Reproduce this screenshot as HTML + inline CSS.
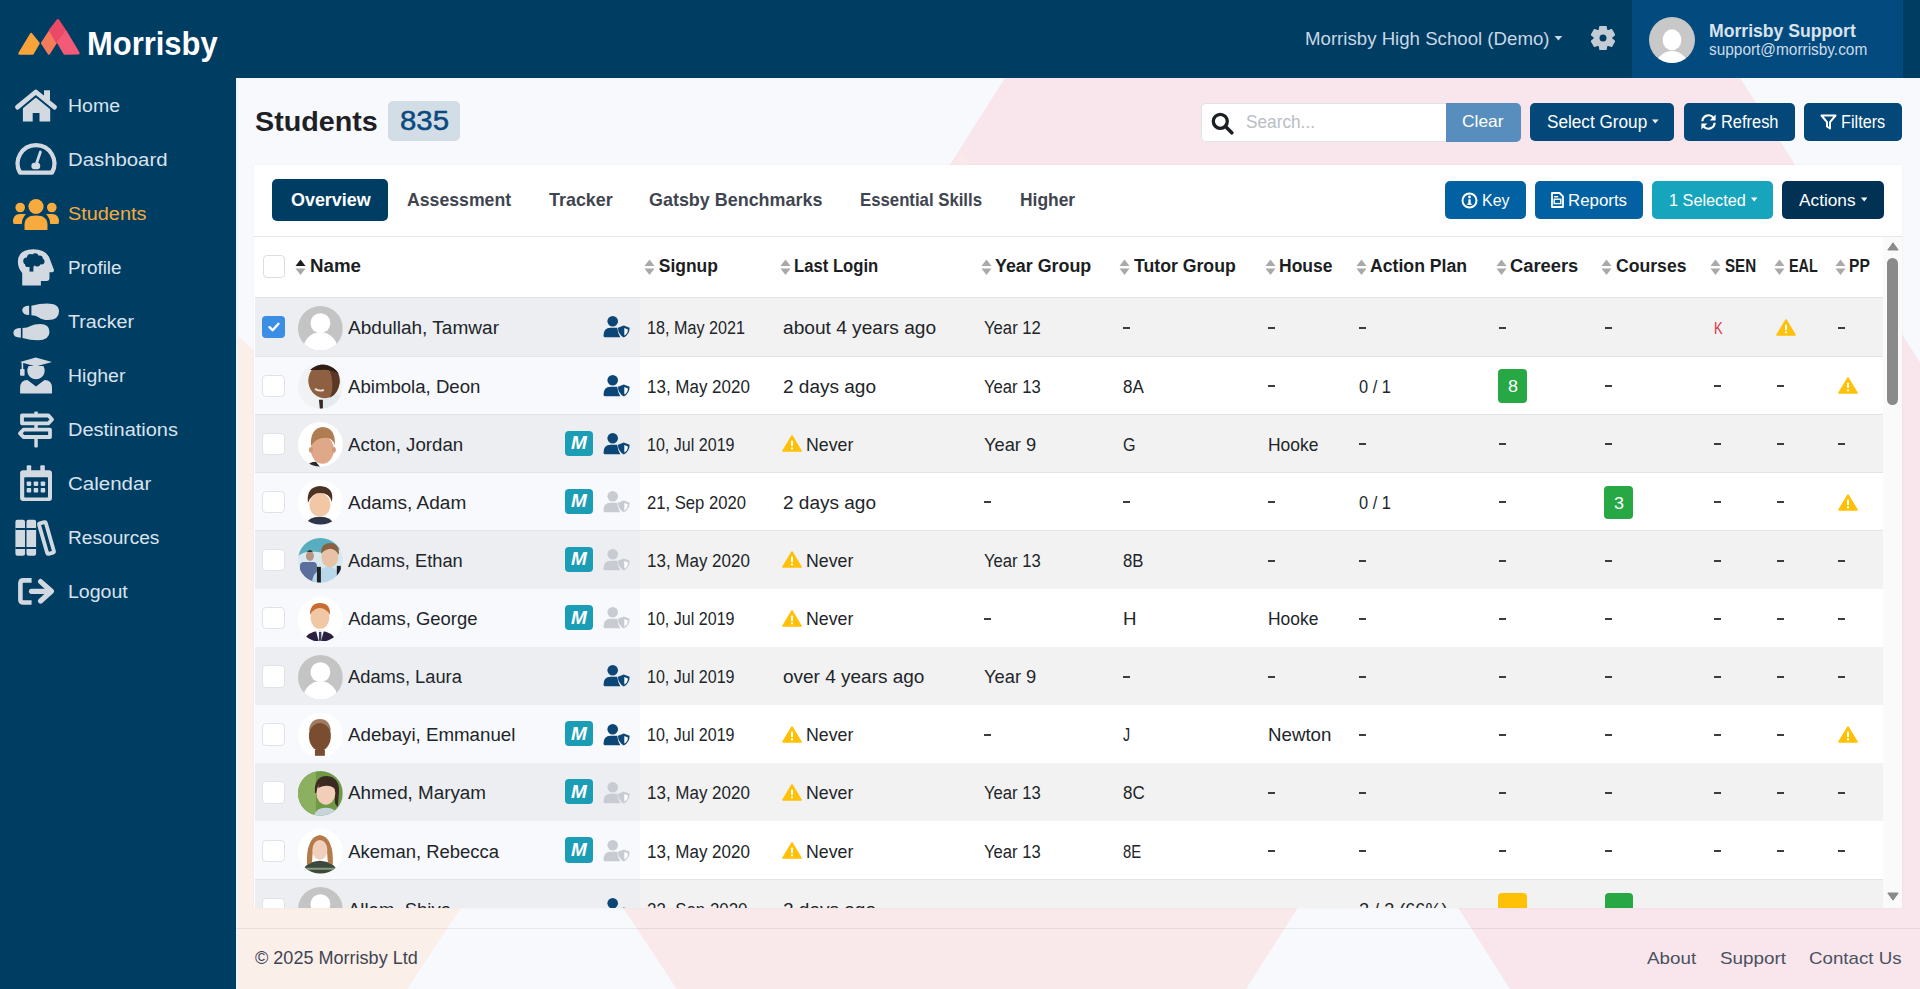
<!DOCTYPE html>
<html><head><meta charset="utf-8"><title>Students</title>
<style>
html,body{margin:0;padding:0;width:1920px;height:989px;overflow:hidden;background:#f8f9fc;font-family:"Liberation Sans",sans-serif}
.t{position:absolute;white-space:nowrap;line-height:1;transform-origin:0 0}
svg{display:block}
</style></head><body>
<svg style="position:absolute;left:0;top:0" width="1920" height="989" viewBox="0 0 1920 989">
<rect x="236" y="78" width="1684" height="911" fill="#f8f9fc"/>
<polygon points="238,336.4 254,350.2 1100,1081 -200,1100 -200,200" fill="#fbefea"/>
<polygon points="1372.5,-503.5 2418,1150 327,1150" fill="#f8e6ec"/>
<polygon points="962,152 1400,832 960,1500 500,830" fill="#f9e9eb"/>
<polygon points="542,785 684,1000 400,1000" fill="#f8f9fc"/>
<polygon points="1378,782 1515,997 1241,997" fill="#f8f9fc"/>
</svg>
<div style="position:absolute;left:0px;top:0px;width:1920px;height:78px;background:#003d62;"></div>
<div style="position:absolute;left:0px;top:0px;width:236px;height:989px;background:#003d62;"></div>
<div style="position:absolute;left:236px;top:78px;width:2px;height:911px;background:#eef5fb;"></div>
<svg style="position:absolute;left:0px;top:0px;" width="236" height="78" viewBox="0 0 236 78">
<g stroke-linejoin="round" stroke-width="2.6">
<polygon points="19.6,53.4 31.2,34.2 38.4,43.3 32.6,53.4" fill="#f9a33b" stroke="#f9a33b"/>
<polygon points="42.2,43.1 49.9,31.5 56.3,41.6 48.9,53.4" fill="#f47b5b" stroke="#f47b5b"/>
<polygon points="50.2,30.4 57.9,20.3 65.6,31.8 56.8,41.8" fill="#ea4a67" stroke="#ea4a67"/>
<polygon points="65.9,32.2 78.4,53.2 64.6,53.4 58.2,42.4" fill="#f25a77" stroke="#f25a77"/>
</g></svg>
<div class="t" style="left:87.4px;top:28.00px;font-size:32.85px;font-weight:700;color:#ffffff;transform:scaleX(0.9420);">Morrisby</div>
<div class="t" style="left:68.0px;top:97.00px;font-size:18.9px;font-weight:400;color:#dae3ee;transform:scaleX(1.0319);">Home</div>
<div class="t" style="left:68.0px;top:151.00px;font-size:18.9px;font-weight:400;color:#dae3ee;transform:scaleX(1.0766);">Dashboard</div>
<div class="t" style="left:68.0px;top:205.00px;font-size:18.9px;font-weight:400;color:#f6ab3c;transform:scaleX(1.0512);">Students</div>
<div class="t" style="left:68.0px;top:259.00px;font-size:18.9px;font-weight:400;color:#dae3ee;">Profile</div>
<div class="t" style="left:68.0px;top:313.00px;font-size:18.9px;font-weight:400;color:#dae3ee;transform:scaleX(1.0422);">Tracker</div>
<div class="t" style="left:68.0px;top:367.00px;font-size:18.9px;font-weight:400;color:#dae3ee;transform:scaleX(1.0313);">Higher</div>
<div class="t" style="left:68.0px;top:421.00px;font-size:18.9px;font-weight:400;color:#dae3ee;transform:scaleX(1.0580);">Destinations</div>
<div class="t" style="left:68.0px;top:475.00px;font-size:18.9px;font-weight:400;color:#dae3ee;transform:scaleX(1.0864);">Calendar</div>
<div class="t" style="left:68.0px;top:529.00px;font-size:18.9px;font-weight:400;color:#dae3ee;transform:scaleX(1.0122);">Resources</div>
<div class="t" style="left:68.0px;top:583.00px;font-size:18.9px;font-weight:400;color:#dae3ee;transform:scaleX(1.0349);">Logout</div>
<svg style="position:absolute;left:0px;top:78px;" width="236" height="560" viewBox="0 78 236 560">
<path d="M22.9,121.6 L22.9,107.5 L36,97 L50.2,107.5 L50.2,121.6 L39.5,121.6 L39.5,113 L32.7,113 L32.7,121.6 Z" fill="#d3d9e1"/>
<polyline points="17.5,107.2 35.8,92 54.5,107.2" fill="none" stroke="#003d62" stroke-width="8.6" stroke-linecap="round" stroke-linejoin="round"/>
<rect x="44" y="90.3" width="6" height="10" fill="#d3d9e1"/>
<polyline points="17.5,107.2 35.8,92 54.5,107.2" fill="none" stroke="#d3d9e1" stroke-width="4.8" stroke-linecap="round" stroke-linejoin="round"/>
<g fill="none" stroke="#d3d9e1" stroke-width="4.2">
<path d="M20,172.6 A18.4,18.4 0 1 1 52,172.6 Z" stroke-linejoin="round"/>
</g>
<line x1="36" y1="165" x2="40.4" y2="152" stroke="#d3d9e1" stroke-width="2.8" stroke-linecap="round"/>
<rect x="31.4" y="162.8" width="8.8" height="6.4" rx="3" fill="#d3d9e1"/>
<g fill="#f6ab3c">
<circle cx="36" cy="206.5" r="7.6"/>
<circle cx="20.2" cy="207.5" r="4.8"/>
<circle cx="51.8" cy="207.5" r="4.8"/>
<path d="M24.5,229.5 L24.5,225 Q24.5,215.5 36,215.5 Q47.5,215.5 47.5,225 L47.5,229.5 Q47.5,230 46,230 L26,230 Q24.5,230 24.5,229.5Z"/>
<path d="M13,222 Q13,214 20,214 L26,214 Q22,218 21.8,224 L14.5,224 Q13,224 13,222Z"/>
<path d="M59,222 Q59,214 52,214 L46,214 Q50,218 50.2,224 L57.5,224 Q59,224 59,222Z"/>
</g>
<path d="M22.2,285.5 L22.2,273 Q17.9,268 17.9,262 Q17.9,249.3 33.4,249.3 Q47,249.3 50.2,260 L54,270 Q54.2,272.3 52,272.3 L49.5,272.3 L49.5,278 Q49.5,280.9 46.5,280.9 L40.9,280.9 L40.9,285.5 Z" fill="#d3d9e1"/>
<g fill="#003d62"><circle cx="26.8" cy="261" r="3.6"/><circle cx="30.5" cy="257.6" r="3.5"/><circle cx="35.2" cy="256.6" r="3.3"/><circle cx="39.6" cy="258.6" r="3.2"/><circle cx="41.6" cy="261.5" r="2.9"/><circle cx="37.2" cy="263" r="3.4"/><circle cx="31.5" cy="263.4" r="3.5"/><circle cx="27.8" cy="264.2" r="2.8"/><circle cx="34" cy="260" r="3.4"/><rect x="29.5" y="264" width="3.9" height="7.6"/></g>
<g fill="#d3d9e1">
<path d="M31.4,305.8 Q40,303.6 47,303.6 Q59,303.6 59,311.5 Q59,320 48,320 Q42,320 38.5,317.2 Q35.5,315.2 31.4,315.2 Z"/>
<path d="M29.1,305.7 L29.1,315 Q22.3,315 22.3,310.3 Q22.3,305.7 29.1,305.7 Z"/>
<path d="M22.5,328 L22.5,338 Q30,340.2 38,340.2 Q49.5,340.2 49.5,331.8 Q49.5,323.9 40,323.9 Q34,323.9 30.5,326 Q27.5,328 22.5,328 Z"/>
<path d="M20.9,328 L20.9,337.7 Q13.4,337.7 13.4,332.85 Q13.4,328 20.9,328 Z"/>
</g>
<g fill="#d3d9e1">
<path d="M20.1,362 L35.7,357.6 L52,362 L35.7,366.5 Z"/>
<path d="M28.6,366 L43.4,366 A8.7,8.7 0 1 1 28.6,366 Z"/>
<rect x="21.6" y="362" width="1.6" height="8"/><rect x="20.1" y="369" width="4.5" height="6.7" rx="0.8"/>
<path d="M20.1,393.4 L20.1,388 Q20.1,380 27.5,379.9 L36,386.4 L44.5,379.9 Q52,380 52,388 L52,393.4 Z"/>
</g>
<g fill="none" stroke="#d3d9e1" stroke-width="3.8" stroke-linejoin="round">
<path d="M22,415.5 L48.5,415.5 L52,419.4 L48.5,423.3 L22,423.3 Z"/>
<path d="M50,429.7 L23.5,429.7 L20,433.35 L23.5,437 L50,437 Z"/>
</g>
<rect x="34.3" y="411.6" width="3.5" height="2.4" fill="#d3d9e1"/>
<rect x="34.3" y="425" width="3.5" height="3" fill="#d3d9e1"/>
<rect x="34.3" y="438.8" width="3.5" height="8.7" rx="1" fill="#d3d9e1"/>
<rect x="20.1" y="470.2" width="31.9" height="30.9" rx="3" fill="#d3d9e1"/>
<rect x="24.2" y="477.3" width="23.8" height="20.3" rx="0.8" fill="#003d62"/>
<rect x="26.7" y="465.2" width="4.5" height="6" rx="1" fill="#d3d9e1"/>
<rect x="40.3" y="465.2" width="4.5" height="6" rx="1" fill="#d3d9e1"/>
<g fill="#d3d9e1">
<rect x="26.7" y="481.4" width="4.5" height="4.5" rx="0.8"/><rect x="33.7" y="481.4" width="4.5" height="4.5" rx="0.8"/><rect x="40.7" y="481.4" width="4.5" height="4.5" rx="0.8"/>
<rect x="26.7" y="488" width="4.5" height="4.5" rx="0.8"/><rect x="33.7" y="488" width="4.5" height="4.5" rx="0.8"/><rect x="40.7" y="488" width="4.5" height="4.5" rx="0.8"/>
</g>
<g fill="#d3d9e1">
<rect x="15.4" y="519.8" width="9.6" height="36" rx="2"/>
<rect x="26.5" y="519.8" width="9.6" height="36" rx="2"/>
</g>
<rect x="15.4" y="528" width="20.7" height="2" fill="#003d62"/>
<rect x="15.4" y="547" width="20.7" height="2" fill="#003d62"/>
<g transform="rotate(-16 46.5 538)"><rect x="43" y="522.2" width="7" height="31.6" rx="1.2" fill="none" stroke="#d3d9e1" stroke-width="3.8"/></g>
<path d="M31.6,580.4 L23.5,580.4 Q20.4,580.4 20.4,583.5 L20.4,599.4 Q20.4,602.5 23.5,602.5 L31.6,602.5" fill="none" stroke="#d3d9e1" stroke-width="4.6"/>
<line x1="31.5" y1="591.3" x2="49" y2="591.3" stroke="#d3d9e1" stroke-width="5.2" stroke-linecap="round"/>
<polyline points="40.6,581.6 51.4,591.3 40.6,601" fill="none" stroke="#d3d9e1" stroke-width="5.2" stroke-linecap="round" stroke-linejoin="round"/>
</svg>
<div class="t" style="left:1304.5px;top:30.00px;font-size:18.17px;font-weight:400;color:#c9d7e6;transform:scaleX(1.0268);">Morrisby High School (Demo)</div>
<svg style="position:absolute;left:1554px;top:35px;" width="9" height="7" viewBox="0 0 9 7"><polygon points="0.5,1 8.3,1 4.4,5.6" fill="#c9d7e6"/></svg>
<svg style="position:absolute;left:1591px;top:26px;" width="24" height="24" viewBox="0 0 24 24"><polygon points="8.49,4.15 9.08,0.57 14.92,0.57 15.51,4.15 17.05,5.04 20.44,3.76 23.36,8.81 20.55,11.11 20.55,12.89 23.36,15.19 20.44,20.24 17.05,18.96 15.51,19.85 14.92,23.43 9.08,23.43 8.49,19.85 6.95,18.96 3.56,20.24 0.64,15.19 3.45,12.89 3.45,11.11 0.64,8.81 3.56,3.76 6.95,5.04" fill="#c3cbd5" stroke="#c3cbd5" stroke-width="1.6" stroke-linejoin="round"/><circle cx="12" cy="12" r="9" fill="#c3cbd5"/><circle cx="12" cy="12" r="3.5" fill="#003d62"/></svg>
<div style="position:absolute;left:1632px;top:0px;width:271px;height:78px;background:#034b7e;"></div>
<svg style="position:absolute;left:1649px;top:17px;" width="46" height="46" viewBox="0 0 46 46"><defs><clipPath id="ac"><circle cx="23" cy="23" r="23"/></clipPath></defs><circle cx="23" cy="23" r="23" fill="#c8c8c8"/><g clip-path="url(#ac)" fill="#fff"><ellipse cx="23" cy="22.8" rx="9.4" ry="10.5"/><ellipse cx="23" cy="52" rx="17" ry="18"/></g></svg>
<div class="t" style="left:1708.8px;top:23.00px;font-size:17.44px;font-weight:700;color:#d9e3ee;transform:scaleX(1.0105);">Morrisby Support</div>
<div class="t" style="left:1708.8px;top:42.00px;font-size:15.6px;font-weight:400;color:#cddbea;transform:scaleX(0.9874);">support@morrisby.com</div>
<div class="t" style="left:255.2px;top:107.00px;font-size:28.34px;font-weight:700;color:#1d2126;transform:scaleX(1.0133);">Students</div>
<div style="position:absolute;left:388px;top:101.4px;width:72px;height:40px;background:#d3dde6;border-radius:5px"></div>
<div class="t" style="left:400.0px;top:108.00px;font-size:27.03px;font-weight:400;color:#0b4a80;transform:scaleX(1.0870);-webkit-text-stroke:0.5px #0b4a80">835</div>
<div style="position:absolute;left:1200.5px;top:102.5px;width:245.5px;height:39px;background:#ffffff;border:1px solid #dfe3e8;border-right:none;border-radius:5px 0 0 5px;box-sizing:border-box"></div>
<svg style="position:absolute;left:1211px;top:111.5px;" width="23" height="23" viewBox="0 0 23 23"><circle cx="9.3" cy="9.3" r="7" fill="none" stroke="#1b1e22" stroke-width="3.3"/><line x1="14.5" y1="14.5" x2="20.8" y2="20.8" stroke="#1b1e22" stroke-width="3.6" stroke-linecap="round"/></svg>
<div class="t" style="left:1246.4px;top:113.00px;font-size:18.02px;font-weight:400;color:#b9bdc3;transform:scaleX(0.9569);">Search...</div>
<div style="position:absolute;left:1446px;top:102.5px;width:75px;height:39px;background:#588ebe;border-radius:0 5px 5px 0"></div>
<div class="t" style="left:1462.4px;top:114.00px;font-size:16.72px;font-weight:400;color:#ffffff;transform:scaleX(1.0420);">Clear</div>
<div style="position:absolute;left:1530px;top:103px;width:144px;height:38px;background:#034878;border-radius:5px"></div>
<div class="t" style="left:1546.7px;top:114.00px;font-size:17.44px;font-weight:400;color:#ffffff;transform:scaleX(0.9845);">Select Group</div>
<svg style="position:absolute;left:1652px;top:119px;" width="7" height="5" viewBox="0 0 7 5"><polygon points="0,0.5 6.6,0.5 3.3,4.5" fill="#fff"/></svg>
<div style="position:absolute;left:1683.5px;top:103px;width:111px;height:38px;background:#034878;border-radius:5px"></div>
<svg style="position:absolute;left:1699.5px;top:113.5px;" width="17" height="16" viewBox="0 0 17 16"><path d="M2.4,7.2 A6.2,6.2 0 0 1 13.4,3.6" fill="none" stroke="#fff" stroke-width="2.2"/><polygon points="15.6,0.4 15.6,6.4 9.6,6.4" fill="#fff"/><path d="M14.6,8.8 A6.2,6.2 0 0 1 3.6,12.4" fill="none" stroke="#fff" stroke-width="2.2"/><polygon points="1.4,15.6 1.4,9.6 7.4,9.6" fill="#fff"/></svg>
<div class="t" style="left:1720.5px;top:114.00px;font-size:17.44px;font-weight:400;color:#ffffff;transform:scaleX(0.9417);">Refresh</div>
<div style="position:absolute;left:1804px;top:103px;width:98px;height:38px;background:#034878;border-radius:5px"></div>
<svg style="position:absolute;left:1819.5px;top:113.5px;" width="17" height="16" viewBox="0 0 17 16"><path d="M1.5,1.5 L15.5,1.5 L10,8.2 L10,14.5 L7,12.5 L7,8.2 Z" fill="none" stroke="#fff" stroke-width="2" stroke-linejoin="round"/></svg>
<div class="t" style="left:1840.8px;top:114.00px;font-size:17.44px;font-weight:400;color:#ffffff;transform:scaleX(0.9311);">Filters</div>
<div style="position:absolute;left:254px;top:164.5px;width:1648px;height:743.5px;background:#ffffff;box-shadow:0 0 2px rgba(0,0,0,0.06)"></div>
<div style="position:absolute;left:254px;top:235.5px;width:1648px;height:1px;background:#e6e8eb;"></div>
<div style="position:absolute;left:272px;top:179.2px;width:116.4px;height:42.1px;background:#003d62;border-radius:5px"></div>
<div class="t" style="left:290.5px;top:191.00px;font-size:18.17px;font-weight:700;color:#ffffff;transform:scaleX(0.9870);">Overview</div>
<div class="t" style="left:406.9px;top:191.00px;font-size:18.02px;font-weight:700;color:#3f4550;transform:scaleX(0.9806);">Assessment</div>
<div class="t" style="left:548.5px;top:191.00px;font-size:18.02px;font-weight:700;color:#3f4550;transform:scaleX(0.9949);">Tracker</div>
<div class="t" style="left:649.2px;top:191.00px;font-size:18.02px;font-weight:700;color:#3f4550;transform:scaleX(0.9952);">Gatsby Benchmarks</div>
<div class="t" style="left:860.0px;top:191.00px;font-size:18.02px;font-weight:700;color:#3f4550;transform:scaleX(0.9300);">Essential Skills</div>
<div class="t" style="left:1019.7px;top:191.00px;font-size:18.02px;font-weight:700;color:#3f4550;transform:scaleX(0.9656);">Higher</div>
<div style="position:absolute;left:1445.25px;top:181px;width:80.35px;height:38px;background:#0261a2;border-radius:5px"></div>
<svg style="position:absolute;left:1460.5px;top:192px;" width="17" height="17" viewBox="0 0 17 17"><circle cx="8.5" cy="8.5" r="7" fill="none" stroke="#fff" stroke-width="2"/><circle cx="8.5" cy="5" r="1.4" fill="#fff"/><rect x="7.3" y="7.3" width="2.4" height="5.5" fill="#fff"/><rect x="6.3" y="11.6" width="4.4" height="1.4" fill="#fff"/></svg>
<div class="t" style="left:1481.5px;top:193.00px;font-size:15.7px;font-weight:400;color:#ffffff;transform:scaleX(1.0168);">Key</div>
<div style="position:absolute;left:1535px;top:181px;width:108px;height:38px;background:#0261a2;border-radius:5px"></div>
<svg style="position:absolute;left:1550.5px;top:192px;" width="13" height="16" viewBox="0 0 13 16"><path d="M1,1 L8.5,1 L12,4.5 L12,15 L1,15 Z" fill="none" stroke="#fff" stroke-width="1.8" stroke-linejoin="round"/><rect x="3.2" y="4" width="4" height="1.5" fill="#fff"/><rect x="3.2" y="7.2" width="6.6" height="4.4" fill="none" stroke="#fff" stroke-width="1.4"/></svg>
<div class="t" style="left:1567.5px;top:193.00px;font-size:16.72px;font-weight:400;color:#ffffff;transform:scaleX(1.0085);">Reports</div>
<div style="position:absolute;left:1652px;top:181px;width:121px;height:38px;background:#17a5bd;border-radius:5px"></div>
<div class="t" style="left:1668.7px;top:193.00px;font-size:16.72px;font-weight:400;color:#ffffff;transform:scaleX(0.9729);">1 Selected</div>
<svg style="position:absolute;left:1751px;top:196.5px;" width="7" height="5" viewBox="0 0 7 5"><polygon points="0,0.5 6.4,0.5 3.2,4.5" fill="#fff"/></svg>
<div style="position:absolute;left:1782.4px;top:181px;width:101.6px;height:38px;background:#013153;border-radius:5px"></div>
<div class="t" style="left:1799.4px;top:193.00px;font-size:16.72px;font-weight:400;color:#ffffff;transform:scaleX(1.0332);">Actions</div>
<svg style="position:absolute;left:1861px;top:196.5px;" width="7" height="5" viewBox="0 0 7 5"><polygon points="0,0.5 6.4,0.5 3.2,4.5" fill="#fff"/></svg>
<div style="position:absolute;left:262.5px;top:255px;width:22.5px;height:22.5px;background:#ffffff;border:1px solid #dadee3;border-radius:4px;box-sizing:border-box"></div>
<svg style="position:absolute;left:294.5px;top:258.5px;" width="11" height="17" viewBox="0 0 11 17"><polygon points="5.5,0.5 10.5,7 0.5,7" fill="#1b1e22"/><polygon points="0.5,9.5 10.5,9.5 5.5,16" fill="#a9a9a9"/></svg>
<div class="t" style="left:309.5px;top:258.00px;font-size:17.44px;font-weight:700;color:#1b1e22;transform:scaleX(1.0737);">Name</div>
<svg style="position:absolute;left:643.75px;top:258.5px;" width="11" height="17" viewBox="0 0 11 17"><polygon points="5.5,0.5 10.5,7 0.5,7" fill="#a9a9a9"/><polygon points="0.5,9.5 10.5,9.5 5.5,16" fill="#a9a9a9"/></svg>
<div class="t" style="left:658.8px;top:258.00px;font-size:17.44px;font-weight:700;color:#1b1e22;">Signup</div>
<svg style="position:absolute;left:779.5px;top:258.5px;" width="11" height="17" viewBox="0 0 11 17"><polygon points="5.5,0.5 10.5,7 0.5,7" fill="#a9a9a9"/><polygon points="0.5,9.5 10.5,9.5 5.5,16" fill="#a9a9a9"/></svg>
<div class="t" style="left:793.8px;top:258.00px;font-size:17.44px;font-weight:700;color:#1b1e22;transform:scaleX(0.9557);">Last Login</div>
<svg style="position:absolute;left:980.5px;top:258.5px;" width="11" height="17" viewBox="0 0 11 17"><polygon points="5.5,0.5 10.5,7 0.5,7" fill="#a9a9a9"/><polygon points="0.5,9.5 10.5,9.5 5.5,16" fill="#a9a9a9"/></svg>
<div class="t" style="left:995.0px;top:258.00px;font-size:17.44px;font-weight:700;color:#1b1e22;transform:scaleX(1.0239);">Year Group</div>
<svg style="position:absolute;left:1119.25px;top:258.5px;" width="11" height="17" viewBox="0 0 11 17"><polygon points="5.5,0.5 10.5,7 0.5,7" fill="#a9a9a9"/><polygon points="0.5,9.5 10.5,9.5 5.5,16" fill="#a9a9a9"/></svg>
<div class="t" style="left:1133.8px;top:258.00px;font-size:17.44px;font-weight:700;color:#1b1e22;transform:scaleX(1.0134);">Tutor Group</div>
<svg style="position:absolute;left:1265px;top:258.5px;" width="11" height="17" viewBox="0 0 11 17"><polygon points="5.5,0.5 10.5,7 0.5,7" fill="#a9a9a9"/><polygon points="0.5,9.5 10.5,9.5 5.5,16" fill="#a9a9a9"/></svg>
<div class="t" style="left:1279.0px;top:258.00px;font-size:17.44px;font-weight:700;color:#1b1e22;transform:scaleX(1.0038);">House</div>
<svg style="position:absolute;left:1356px;top:258.5px;" width="11" height="17" viewBox="0 0 11 17"><polygon points="5.5,0.5 10.5,7 0.5,7" fill="#a9a9a9"/><polygon points="0.5,9.5 10.5,9.5 5.5,16" fill="#a9a9a9"/></svg>
<div class="t" style="left:1370.4px;top:258.00px;font-size:17.44px;font-weight:700;color:#1b1e22;transform:scaleX(1.0123);">Action Plan</div>
<svg style="position:absolute;left:1496px;top:258.5px;" width="11" height="17" viewBox="0 0 11 17"><polygon points="5.5,0.5 10.5,7 0.5,7" fill="#a9a9a9"/><polygon points="0.5,9.5 10.5,9.5 5.5,16" fill="#a9a9a9"/></svg>
<div class="t" style="left:1509.7px;top:258.00px;font-size:17.44px;font-weight:700;color:#1b1e22;transform:scaleX(1.0513);">Careers</div>
<svg style="position:absolute;left:1601.3px;top:258.5px;" width="11" height="17" viewBox="0 0 11 17"><polygon points="5.5,0.5 10.5,7 0.5,7" fill="#a9a9a9"/><polygon points="0.5,9.5 10.5,9.5 5.5,16" fill="#a9a9a9"/></svg>
<div class="t" style="left:1615.8px;top:258.00px;font-size:17.44px;font-weight:700;color:#1b1e22;transform:scaleX(1.0103);">Courses</div>
<svg style="position:absolute;left:1710.3px;top:258.5px;" width="11" height="17" viewBox="0 0 11 17"><polygon points="5.5,0.5 10.5,7 0.5,7" fill="#a9a9a9"/><polygon points="0.5,9.5 10.5,9.5 5.5,16" fill="#a9a9a9"/></svg>
<div class="t" style="left:1724.7px;top:258.00px;font-size:17.44px;font-weight:700;color:#1b1e22;transform:scaleX(0.8673);">SEN</div>
<svg style="position:absolute;left:1774.2px;top:258.5px;" width="11" height="17" viewBox="0 0 11 17"><polygon points="5.5,0.5 10.5,7 0.5,7" fill="#a9a9a9"/><polygon points="0.5,9.5 10.5,9.5 5.5,16" fill="#a9a9a9"/></svg>
<div class="t" style="left:1788.7px;top:258.00px;font-size:17.44px;font-weight:700;color:#1b1e22;transform:scaleX(0.8258);">EAL</div>
<svg style="position:absolute;left:1835px;top:258.5px;" width="11" height="17" viewBox="0 0 11 17"><polygon points="5.5,0.5 10.5,7 0.5,7" fill="#a9a9a9"/><polygon points="0.5,9.5 10.5,9.5 5.5,16" fill="#a9a9a9"/></svg>
<div class="t" style="left:1849.2px;top:258.00px;font-size:17.44px;font-weight:700;color:#1b1e22;transform:scaleX(0.8940);">PP</div>
<div style="position:absolute;left:255px;top:296.5px;width:1628px;height:2px;background:#dfe2e6;"></div>
<div style="position:absolute;left:0;top:0;width:1920px;height:907.5px;overflow:hidden">
<div style="position:absolute;left:255px;top:298.0px;width:385px;height:58.60000000000002px;background:#eceef2;"></div>
<div style="position:absolute;left:640px;top:298.0px;width:1243px;height:58.60000000000002px;background:#f2f2f2;"></div>
<div style="position:absolute;left:255px;top:356.1px;width:1628px;height:1px;background:#e2e4e7;"></div>
<div style="position:absolute;left:262.3px;top:316.1px;width:23px;height:22.4px;background:#3a8ee4;border-radius:4px"></div>
<svg style="position:absolute;left:266.5px;top:320.3px;" width="14" height="14" viewBox="0 0 14 14"><polyline points="2.5,7.2 5.6,10.2 11.5,3.8" fill="none" stroke="#fff" stroke-width="2.4" stroke-linecap="round" stroke-linejoin="round"/></svg>
<svg style="position:absolute;left:297.90000000000003px;top:305.50000000000006px;" width="44.8" height="44.8" viewBox="0 0 45 45"><defs><clipPath id="av1"><circle cx="22.5" cy="22.5" r="22.5"/></clipPath></defs><g clip-path="url(#av1)"><rect width="45" height="45" fill="#c4c4c4"/><circle cx="22.5" cy="17.2" r="10" fill="#fff"/><ellipse cx="22.5" cy="46.5" rx="18" ry="20.5" fill="#fff"/></g></svg>
<div class="t" style="left:348.3px;top:319.00px;font-size:18.46px;font-weight:400;color:#212529;transform:scaleX(1.0327);">Abdullah, Tamwar</div>
<svg style="position:absolute;left:602.5px;top:316.3px;" width="27" height="22" viewBox="0 0 27 22"><circle cx="9.7" cy="5.3" r="5.3" fill="#0c4677"/><path d="M0.5,19.8 Q0.5,11.8 7.5,11.8 L14.3,11.8 Q14.6,17.2 17.3,21.2 L1.8,21.2 Q0.5,21.2 0.5,19.8 Z" fill="#0c4677"/><path d="M20.8,9.4 L26.6,11.8 Q26.8,18 20.8,21.6 Q14.8,18 15,11.8 Z" fill="#0c4677"/><path d="M21.3,12 L24.9,13.4 Q24.8,17.6 21.3,19.6 Z" fill="#ffffff"/></svg>
<div class="t" style="left:647.3px;top:319.00px;font-size:18.46px;font-weight:400;color:#212529;transform:scaleX(0.8762);">18, May 2021</div>
<div class="t" style="left:782.5px;top:319.00px;font-size:18.46px;font-weight:400;color:#212529;transform:scaleX(1.0372);">about 4 years ago</div>
<div class="t" style="left:983.6px;top:319.00px;font-size:18.46px;font-weight:400;color:#212529;transform:scaleX(0.9047);">Year 12</div>
<div style="position:absolute;left:1123px;top:327px;width:7px;height:2px;background:#3a3d42;"></div>
<div style="position:absolute;left:1268px;top:327px;width:7px;height:2px;background:#3a3d42;"></div>
<div style="position:absolute;left:1359px;top:327px;width:7px;height:2px;background:#3a3d42;"></div>
<div style="position:absolute;left:1499px;top:327px;width:7px;height:2px;background:#3a3d42;"></div>
<div style="position:absolute;left:1605px;top:327px;width:7px;height:2px;background:#3a3d42;"></div>
<div class="t" style="left:1713.8px;top:320.00px;font-size:16.42px;font-weight:400;color:#dc3545;transform:scaleX(0.7943);">K</div>
<div style="position:absolute;left:1776px;top:318.8px;width:20px;height:17px"><svg width="20" height="17" viewBox="0 0 20 17"><path d="M10,1 L19,16 L1,16 Z" fill="#ffc107" stroke="#ffc107" stroke-width="1.6" stroke-linejoin="round"/><rect x="9" y="5.5" width="2" height="5.8" rx="0.8" fill="#fff"/><circle cx="10" cy="13.4" r="1.1" fill="#fff"/></svg></div>
<div style="position:absolute;left:1838px;top:327px;width:7px;height:2px;background:#3a3d42;"></div>
<div style="position:absolute;left:255px;top:356.6px;width:385px;height:58.099999999999966px;background:#f8f9fc;"></div>
<div style="position:absolute;left:640px;top:356.6px;width:1243px;height:58.099999999999966px;background:#ffffff;"></div>
<div style="position:absolute;left:255px;top:414.2px;width:1628px;height:1px;background:#e2e4e7;"></div>
<div style="position:absolute;left:262.3px;top:374.70000000000005px;width:23px;height:22.4px;background:#ffffff;border:1px solid #dfe2e6;border-radius:4px;box-sizing:border-box"></div>
<svg style="position:absolute;left:297.90000000000003px;top:364.1000000000001px;" width="44.8" height="44.8" viewBox="0 0 45 45"><defs><clipPath id="av2"><circle cx="22.5" cy="22.5" r="22.5"/></clipPath></defs><g clip-path="url(#av2)"><rect width="45" height="45" fill="#f1f2f4"/><path d="M20,45 L22,36 Q30,33 40,30 L45,34 L45,45Z" fill="#e6ebf0"/><path d="M22,45 L21,36 L25,36 L25,45Z" fill="#3a2a22"/><ellipse cx="26" cy="17.5" rx="15.5" ry="17" fill="#8e5f40" transform="rotate(-18 26 17.5)"/><path d="M30,2 Q42,4 42,18 Q40,30 32,34 Q38,20 30,2Z" fill="#5a3826"/><path d="M12,6 Q20,-1 32,1 Q40,3 42,10 Q32,5 22,6 Q16,6 12,6Z" fill="#2e1d14"/><path d="M17,25 Q22,28 26,26" stroke="#f0e0d0" stroke-width="1.8" fill="none"/></g></svg>
<div class="t" style="left:348.3px;top:378.00px;font-size:18.46px;font-weight:400;color:#212529;transform:scaleX(1.0092);">Abimbola, Deon</div>
<svg style="position:absolute;left:602.5px;top:374.90000000000003px;" width="27" height="22" viewBox="0 0 27 22"><circle cx="9.7" cy="5.3" r="5.3" fill="#0c4677"/><path d="M0.5,19.8 Q0.5,11.8 7.5,11.8 L14.3,11.8 Q14.6,17.2 17.3,21.2 L1.8,21.2 Q0.5,21.2 0.5,19.8 Z" fill="#0c4677"/><path d="M20.8,9.4 L26.6,11.8 Q26.8,18 20.8,21.6 Q14.8,18 15,11.8 Z" fill="#0c4677"/><path d="M21.3,12 L24.9,13.4 Q24.8,17.6 21.3,19.6 Z" fill="#ffffff"/></svg>
<div class="t" style="left:647.3px;top:378.00px;font-size:18.46px;font-weight:400;color:#212529;transform:scaleX(0.9209);">13, May 2020</div>
<div class="t" style="left:782.5px;top:378.00px;font-size:18.46px;font-weight:400;color:#212529;transform:scaleX(1.0308);">2 days ago</div>
<div class="t" style="left:983.6px;top:378.00px;font-size:18.46px;font-weight:400;color:#212529;transform:scaleX(0.9032);">Year 13</div>
<div class="t" style="left:1122.8px;top:378.00px;font-size:18.46px;font-weight:400;color:#212529;transform:scaleX(0.9219);">8A</div>
<div style="position:absolute;left:1268px;top:385px;width:7px;height:2px;background:#3a3d42;"></div>
<div class="t" style="left:1359.1px;top:378.00px;font-size:18.46px;font-weight:400;color:#212529;transform:scaleX(0.8888);">0 / 1</div>
<div style="position:absolute;left:1498.3px;top:369.40000000000003px;width:29px;height:33.6px;background:#28a745;border-radius:4px"></div>
<div class="t" style="left:1507.8px;top:379.00px;font-size:16.72px;font-weight:400;color:#ffffff;transform:scaleX(1.0756);">8</div>
<div style="position:absolute;left:1605px;top:385px;width:7px;height:2px;background:#3a3d42;"></div>
<div style="position:absolute;left:1714px;top:385px;width:7px;height:2px;background:#3a3d42;"></div>
<div style="position:absolute;left:1777px;top:385px;width:7px;height:2px;background:#3a3d42;"></div>
<div style="position:absolute;left:1837.5px;top:377.40000000000003px;width:20px;height:17px"><svg width="20" height="17" viewBox="0 0 20 17"><path d="M10,1 L19,16 L1,16 Z" fill="#ffc107" stroke="#ffc107" stroke-width="1.6" stroke-linejoin="round"/><rect x="9" y="5.5" width="2" height="5.8" rx="0.8" fill="#fff"/><circle cx="10" cy="13.4" r="1.1" fill="#fff"/></svg></div>
<div style="position:absolute;left:255px;top:414.7px;width:385px;height:58.10000000000002px;background:#eceef2;"></div>
<div style="position:absolute;left:640px;top:414.7px;width:1243px;height:58.10000000000002px;background:#f2f2f2;"></div>
<div style="position:absolute;left:255px;top:472.3px;width:1628px;height:1px;background:#e2e4e7;"></div>
<div style="position:absolute;left:262.3px;top:432.8px;width:23px;height:22.4px;background:#ffffff;border:1px solid #dfe2e6;border-radius:4px;box-sizing:border-box"></div>
<svg style="position:absolute;left:297.90000000000003px;top:422.20000000000005px;" width="44.8" height="44.8" viewBox="0 0 45 45"><defs><clipPath id="av3"><circle cx="22.5" cy="22.5" r="22.5"/></clipPath></defs><g clip-path="url(#av3)"><rect width="45" height="45" fill="#ffffff"/><path d="M9,45 Q11,40 18,40 L22,45Z" fill="#2a2a2a"/><ellipse cx="24.5" cy="28" rx="11.5" ry="14" fill="#dfa888"/><ellipse cx="13" cy="28" rx="2" ry="3" fill="#d09878"/><ellipse cx="36" cy="28" rx="2" ry="3" fill="#d09878"/><path d="M13,24 Q12,6 25,5 Q38,6 37,23 Q34,15 26,16 Q18,16 13,24Z" fill="#b07c52"/></g></svg>
<div class="t" style="left:348.3px;top:436.00px;font-size:18.46px;font-weight:400;color:#212529;transform:scaleX(1.0125);">Acton, Jordan</div>
<div style="position:absolute;left:564.8px;top:430.5px;width:28.1px;height:25.4px;background:#1c9db6;border-radius:4px"></div>
<div class="t" style="left:571.0px;top:435.00px;font-size:17.73px;font-weight:700;color:#ffffff;transform:scaleX(1.0701);font-style:italic">M</div>
<svg style="position:absolute;left:602.5px;top:433.0px;" width="27" height="22" viewBox="0 0 27 22"><circle cx="9.7" cy="5.3" r="5.3" fill="#0c4677"/><path d="M0.5,19.8 Q0.5,11.8 7.5,11.8 L14.3,11.8 Q14.6,17.2 17.3,21.2 L1.8,21.2 Q0.5,21.2 0.5,19.8 Z" fill="#0c4677"/><path d="M20.8,9.4 L26.6,11.8 Q26.8,18 20.8,21.6 Q14.8,18 15,11.8 Z" fill="#0c4677"/><path d="M21.3,12 L24.9,13.4 Q24.8,17.6 21.3,19.6 Z" fill="#ffffff"/></svg>
<div class="t" style="left:647.3px;top:436.00px;font-size:18.46px;font-weight:400;color:#212529;transform:scaleX(0.8709);">10, Jul 2019</div>
<div style="position:absolute;left:782px;top:435.2px;width:20px;height:17px"><svg width="20" height="17" viewBox="0 0 20 17"><path d="M10,1 L19,16 L1,16 Z" fill="#ffc107" stroke="#ffc107" stroke-width="1.6" stroke-linejoin="round"/><rect x="9" y="5.5" width="2" height="5.8" rx="0.8" fill="#fff"/><circle cx="10" cy="13.4" r="1.1" fill="#fff"/></svg></div>
<div class="t" style="left:806.3px;top:436.00px;font-size:18.46px;font-weight:400;color:#212529;transform:scaleX(0.9616);">Never</div>
<div class="t" style="left:983.6px;top:436.00px;font-size:18.46px;font-weight:400;color:#212529;transform:scaleX(0.9916);">Year 9</div>
<div class="t" style="left:1122.8px;top:436.00px;font-size:18.46px;font-weight:400;color:#212529;transform:scaleX(0.8715);">G</div>
<div class="t" style="left:1268.2px;top:436.00px;font-size:18.46px;font-weight:400;color:#212529;transform:scaleX(0.9456);">Hooke</div>
<div style="position:absolute;left:1359px;top:443px;width:7px;height:2px;background:#3a3d42;"></div>
<div style="position:absolute;left:1499px;top:443px;width:7px;height:2px;background:#3a3d42;"></div>
<div style="position:absolute;left:1605px;top:443px;width:7px;height:2px;background:#3a3d42;"></div>
<div style="position:absolute;left:1714px;top:443px;width:7px;height:2px;background:#3a3d42;"></div>
<div style="position:absolute;left:1777px;top:443px;width:7px;height:2px;background:#3a3d42;"></div>
<div style="position:absolute;left:1838px;top:443px;width:7px;height:2px;background:#3a3d42;"></div>
<div style="position:absolute;left:255px;top:472.8px;width:385px;height:58.099999999999966px;background:#f8f9fc;"></div>
<div style="position:absolute;left:640px;top:472.8px;width:1243px;height:58.099999999999966px;background:#ffffff;"></div>
<div style="position:absolute;left:255px;top:530.4px;width:1628px;height:1px;background:#e2e4e7;"></div>
<div style="position:absolute;left:262.3px;top:490.90000000000003px;width:23px;height:22.4px;background:#ffffff;border:1px solid #dfe2e6;border-radius:4px;box-sizing:border-box"></div>
<svg style="position:absolute;left:297.90000000000003px;top:480.30000000000007px;" width="44.8" height="44.8" viewBox="0 0 45 45"><defs><clipPath id="av4"><circle cx="22.5" cy="22.5" r="22.5"/></clipPath></defs><g clip-path="url(#av4)"><rect width="45" height="45" fill="#ffffff"/><path d="M8,45 Q10,37 22,37 Q34,37 36,45Z" fill="#2e3548"/><ellipse cx="22" cy="25" rx="10.5" ry="12" fill="#f2c7a6"/><path d="M10,23 Q8,7 22,6 Q37,7 34,22 Q32,13 22,13 Q14,13 10,23Z" fill="#4b3222"/></g></svg>
<div class="t" style="left:348.3px;top:494.00px;font-size:18.46px;font-weight:400;color:#212529;transform:scaleX(1.0298);">Adams, Adam</div>
<div style="position:absolute;left:564.8px;top:488.6px;width:28.1px;height:25.4px;background:#1c9db6;border-radius:4px"></div>
<div class="t" style="left:571.0px;top:493.00px;font-size:17.73px;font-weight:700;color:#ffffff;transform:scaleX(1.0701);font-style:italic">M</div>
<svg style="position:absolute;left:602.5px;top:491.1px;" width="27" height="22" viewBox="0 0 27 22"><circle cx="9.7" cy="5.3" r="5.3" fill="#c8ccd2"/><path d="M0.5,19.8 Q0.5,11.8 7.5,11.8 L14.3,11.8 Q14.6,17.2 17.3,21.2 L1.8,21.2 Q0.5,21.2 0.5,19.8 Z" fill="#c8ccd2"/><path d="M20.8,9.4 L26.6,11.8 Q26.8,18 20.8,21.6 Q14.8,18 15,11.8 Z" fill="#c8ccd2"/><path d="M21.3,12 L24.9,13.4 Q24.8,17.6 21.3,19.6 Z" fill="#ffffff"/></svg>
<div class="t" style="left:647.3px;top:494.00px;font-size:18.46px;font-weight:400;color:#212529;transform:scaleX(0.9015);">21, Sep 2020</div>
<div class="t" style="left:782.5px;top:494.00px;font-size:18.46px;font-weight:400;color:#212529;transform:scaleX(1.0308);">2 days ago</div>
<div style="position:absolute;left:984px;top:501px;width:7px;height:2px;background:#3a3d42;"></div>
<div style="position:absolute;left:1123px;top:501px;width:7px;height:2px;background:#3a3d42;"></div>
<div style="position:absolute;left:1268px;top:501px;width:7px;height:2px;background:#3a3d42;"></div>
<div class="t" style="left:1359.1px;top:494.00px;font-size:18.46px;font-weight:400;color:#212529;transform:scaleX(0.8888);">0 / 1</div>
<div style="position:absolute;left:1499px;top:501px;width:7px;height:2px;background:#3a3d42;"></div>
<div style="position:absolute;left:1604.0px;top:485.6px;width:29px;height:33.6px;background:#28a745;border-radius:4px"></div>
<div class="t" style="left:1613.5px;top:496.00px;font-size:16.72px;font-weight:400;color:#ffffff;transform:scaleX(1.0756);">3</div>
<div style="position:absolute;left:1714px;top:501px;width:7px;height:2px;background:#3a3d42;"></div>
<div style="position:absolute;left:1777px;top:501px;width:7px;height:2px;background:#3a3d42;"></div>
<div style="position:absolute;left:1837.5px;top:493.6px;width:20px;height:17px"><svg width="20" height="17" viewBox="0 0 20 17"><path d="M10,1 L19,16 L1,16 Z" fill="#ffc107" stroke="#ffc107" stroke-width="1.6" stroke-linejoin="round"/><rect x="9" y="5.5" width="2" height="5.8" rx="0.8" fill="#fff"/><circle cx="10" cy="13.4" r="1.1" fill="#fff"/></svg></div>
<div style="position:absolute;left:255px;top:530.9px;width:385px;height:58.10000000000002px;background:#eceef2;"></div>
<div style="position:absolute;left:640px;top:530.9px;width:1243px;height:58.10000000000002px;background:#f2f2f2;"></div>
<div style="position:absolute;left:255px;top:588.5px;width:1628px;height:1px;background:#e2e4e7;"></div>
<div style="position:absolute;left:262.3px;top:548.9999999999999px;width:23px;height:22.4px;background:#ffffff;border:1px solid #dfe2e6;border-radius:4px;box-sizing:border-box"></div>
<svg style="position:absolute;left:297.90000000000003px;top:538.4px;" width="44.8" height="44.8" viewBox="0 0 45 45"><defs><clipPath id="av5"><circle cx="22.5" cy="22.5" r="22.5"/></clipPath></defs><g clip-path="url(#av5)"><rect width="45" height="45" fill="#d8e8ee"/><path d="M0,0 L45,0 L45,10 Q30,16 20,14 Q8,12 0,18Z" fill="#58aebe"/><ellipse cx="12" cy="18" rx="4" ry="5" fill="#b89484"/><path d="M9,14 Q12,10 15,14Z" fill="#333"/><rect x="2" y="24" width="17" height="21" rx="4" fill="#5a6f9c"/><path d="M14,45 Q15,31 31,29 Q44,31 45,45Z" fill="#b8d8ea"/><rect x="19" y="29" width="4" height="16" fill="#1e2226"/><rect x="39" y="28" width="4" height="14" fill="#1e2226"/><ellipse cx="32" cy="19" rx="8.5" ry="10.5" fill="#e8c2a6"/><path d="M23,16 Q23,5 32,5 Q42,5 41,17 Q37,10 31,11 Q26,12 23,16Z" fill="#8a6242"/></g></svg>
<div class="t" style="left:348.3px;top:552.00px;font-size:18.46px;font-weight:400;color:#212529;transform:scaleX(0.9904);">Adams, Ethan</div>
<div style="position:absolute;left:564.8px;top:546.6999999999999px;width:28.1px;height:25.4px;background:#1c9db6;border-radius:4px"></div>
<div class="t" style="left:571.0px;top:551.00px;font-size:17.73px;font-weight:700;color:#ffffff;transform:scaleX(1.0701);font-style:italic">M</div>
<svg style="position:absolute;left:602.5px;top:549.1999999999999px;" width="27" height="22" viewBox="0 0 27 22"><circle cx="9.7" cy="5.3" r="5.3" fill="#c8ccd2"/><path d="M0.5,19.8 Q0.5,11.8 7.5,11.8 L14.3,11.8 Q14.6,17.2 17.3,21.2 L1.8,21.2 Q0.5,21.2 0.5,19.8 Z" fill="#c8ccd2"/><path d="M20.8,9.4 L26.6,11.8 Q26.8,18 20.8,21.6 Q14.8,18 15,11.8 Z" fill="#c8ccd2"/><path d="M21.3,12 L24.9,13.4 Q24.8,17.6 21.3,19.6 Z" fill="#ffffff"/></svg>
<div class="t" style="left:647.3px;top:552.00px;font-size:18.46px;font-weight:400;color:#212529;transform:scaleX(0.9209);">13, May 2020</div>
<div style="position:absolute;left:782px;top:551.4px;width:20px;height:17px"><svg width="20" height="17" viewBox="0 0 20 17"><path d="M10,1 L19,16 L1,16 Z" fill="#ffc107" stroke="#ffc107" stroke-width="1.6" stroke-linejoin="round"/><rect x="9" y="5.5" width="2" height="5.8" rx="0.8" fill="#fff"/><circle cx="10" cy="13.4" r="1.1" fill="#fff"/></svg></div>
<div class="t" style="left:806.3px;top:552.00px;font-size:18.46px;font-weight:400;color:#212529;transform:scaleX(0.9616);">Never</div>
<div class="t" style="left:983.6px;top:552.00px;font-size:18.46px;font-weight:400;color:#212529;transform:scaleX(0.9032);">Year 13</div>
<div class="t" style="left:1122.8px;top:552.00px;font-size:18.46px;font-weight:400;color:#212529;transform:scaleX(0.9086);">8B</div>
<div style="position:absolute;left:1268px;top:560px;width:7px;height:2px;background:#3a3d42;"></div>
<div style="position:absolute;left:1359px;top:560px;width:7px;height:2px;background:#3a3d42;"></div>
<div style="position:absolute;left:1499px;top:560px;width:7px;height:2px;background:#3a3d42;"></div>
<div style="position:absolute;left:1605px;top:560px;width:7px;height:2px;background:#3a3d42;"></div>
<div style="position:absolute;left:1714px;top:560px;width:7px;height:2px;background:#3a3d42;"></div>
<div style="position:absolute;left:1777px;top:560px;width:7px;height:2px;background:#3a3d42;"></div>
<div style="position:absolute;left:1838px;top:560px;width:7px;height:2px;background:#3a3d42;"></div>
<div style="position:absolute;left:255px;top:589.0px;width:385px;height:58.10000000000002px;background:#f8f9fc;"></div>
<div style="position:absolute;left:640px;top:589.0px;width:1243px;height:58.10000000000002px;background:#ffffff;"></div>
<div style="position:absolute;left:255px;top:646.6px;width:1628px;height:1px;background:#e2e4e7;"></div>
<div style="position:absolute;left:262.3px;top:607.0999999999999px;width:23px;height:22.4px;background:#ffffff;border:1px solid #dfe2e6;border-radius:4px;box-sizing:border-box"></div>
<svg style="position:absolute;left:297.90000000000003px;top:596.5px;" width="44.8" height="44.8" viewBox="0 0 45 45"><defs><clipPath id="av6"><circle cx="22.5" cy="22.5" r="22.5"/></clipPath></defs><g clip-path="url(#av6)"><rect width="45" height="45" fill="#ffffff"/><path d="M6,45 Q8,35 22,34 Q36,35 38,45Z" fill="#2a2140"/><path d="M18,34 L26,34 L23,45 L21,45Z" fill="#ffffff"/><rect x="21" y="35" width="2.5" height="9" fill="#3a3a5a"/><ellipse cx="22" cy="21" rx="9.5" ry="11" fill="#f1c8a6"/><path d="M12,18 Q12,6 22,6 Q33,6 32,18 Q28,11 22,11 Q16,11 12,18Z" fill="#c86c34"/></g></svg>
<div class="t" style="left:348.3px;top:610.00px;font-size:18.46px;font-weight:400;color:#212529;">Adams, George</div>
<div style="position:absolute;left:564.8px;top:604.8px;width:28.1px;height:25.4px;background:#1c9db6;border-radius:4px"></div>
<div class="t" style="left:571.0px;top:610.00px;font-size:17.73px;font-weight:700;color:#ffffff;transform:scaleX(1.0701);font-style:italic">M</div>
<svg style="position:absolute;left:602.5px;top:607.3px;" width="27" height="22" viewBox="0 0 27 22"><circle cx="9.7" cy="5.3" r="5.3" fill="#c8ccd2"/><path d="M0.5,19.8 Q0.5,11.8 7.5,11.8 L14.3,11.8 Q14.6,17.2 17.3,21.2 L1.8,21.2 Q0.5,21.2 0.5,19.8 Z" fill="#c8ccd2"/><path d="M20.8,9.4 L26.6,11.8 Q26.8,18 20.8,21.6 Q14.8,18 15,11.8 Z" fill="#c8ccd2"/><path d="M21.3,12 L24.9,13.4 Q24.8,17.6 21.3,19.6 Z" fill="#ffffff"/></svg>
<div class="t" style="left:647.3px;top:610.00px;font-size:18.46px;font-weight:400;color:#212529;transform:scaleX(0.8709);">10, Jul 2019</div>
<div style="position:absolute;left:782px;top:609.5px;width:20px;height:17px"><svg width="20" height="17" viewBox="0 0 20 17"><path d="M10,1 L19,16 L1,16 Z" fill="#ffc107" stroke="#ffc107" stroke-width="1.6" stroke-linejoin="round"/><rect x="9" y="5.5" width="2" height="5.8" rx="0.8" fill="#fff"/><circle cx="10" cy="13.4" r="1.1" fill="#fff"/></svg></div>
<div class="t" style="left:806.3px;top:610.00px;font-size:18.46px;font-weight:400;color:#212529;transform:scaleX(0.9616);">Never</div>
<div style="position:absolute;left:984px;top:618px;width:7px;height:2px;background:#3a3d42;"></div>
<div class="t" style="left:1122.8px;top:610.00px;font-size:18.46px;font-weight:400;color:#212529;transform:scaleX(1.0129);">H</div>
<div class="t" style="left:1268.2px;top:610.00px;font-size:18.46px;font-weight:400;color:#212529;transform:scaleX(0.9456);">Hooke</div>
<div style="position:absolute;left:1359px;top:618px;width:7px;height:2px;background:#3a3d42;"></div>
<div style="position:absolute;left:1499px;top:618px;width:7px;height:2px;background:#3a3d42;"></div>
<div style="position:absolute;left:1605px;top:618px;width:7px;height:2px;background:#3a3d42;"></div>
<div style="position:absolute;left:1714px;top:618px;width:7px;height:2px;background:#3a3d42;"></div>
<div style="position:absolute;left:1777px;top:618px;width:7px;height:2px;background:#3a3d42;"></div>
<div style="position:absolute;left:1838px;top:618px;width:7px;height:2px;background:#3a3d42;"></div>
<div style="position:absolute;left:255px;top:647.1px;width:385px;height:58.10000000000002px;background:#eceef2;"></div>
<div style="position:absolute;left:640px;top:647.1px;width:1243px;height:58.10000000000002px;background:#f2f2f2;"></div>
<div style="position:absolute;left:255px;top:704.7px;width:1628px;height:1px;background:#e2e4e7;"></div>
<div style="position:absolute;left:262.3px;top:665.1999999999999px;width:23px;height:22.4px;background:#ffffff;border:1px solid #dfe2e6;border-radius:4px;box-sizing:border-box"></div>
<svg style="position:absolute;left:297.90000000000003px;top:654.6px;" width="44.8" height="44.8" viewBox="0 0 45 45"><defs><clipPath id="av7"><circle cx="22.5" cy="22.5" r="22.5"/></clipPath></defs><g clip-path="url(#av7)"><rect width="45" height="45" fill="#c4c4c4"/><circle cx="22.5" cy="17.2" r="10" fill="#fff"/><ellipse cx="22.5" cy="46.5" rx="18" ry="20.5" fill="#fff"/></g></svg>
<div class="t" style="left:348.3px;top:668.00px;font-size:18.46px;font-weight:400;color:#212529;transform:scaleX(0.9922);">Adams, Laura</div>
<svg style="position:absolute;left:602.5px;top:665.4px;" width="27" height="22" viewBox="0 0 27 22"><circle cx="9.7" cy="5.3" r="5.3" fill="#0c4677"/><path d="M0.5,19.8 Q0.5,11.8 7.5,11.8 L14.3,11.8 Q14.6,17.2 17.3,21.2 L1.8,21.2 Q0.5,21.2 0.5,19.8 Z" fill="#0c4677"/><path d="M20.8,9.4 L26.6,11.8 Q26.8,18 20.8,21.6 Q14.8,18 15,11.8 Z" fill="#0c4677"/><path d="M21.3,12 L24.9,13.4 Q24.8,17.6 21.3,19.6 Z" fill="#ffffff"/></svg>
<div class="t" style="left:647.3px;top:668.00px;font-size:18.46px;font-weight:400;color:#212529;transform:scaleX(0.8709);">10, Jul 2019</div>
<div class="t" style="left:782.5px;top:668.00px;font-size:18.46px;font-weight:400;color:#212529;transform:scaleX(1.0295);">over 4 years ago</div>
<div class="t" style="left:983.6px;top:668.00px;font-size:18.46px;font-weight:400;color:#212529;transform:scaleX(0.9935);">Year 9</div>
<div style="position:absolute;left:1123px;top:676px;width:7px;height:2px;background:#3a3d42;"></div>
<div style="position:absolute;left:1268px;top:676px;width:7px;height:2px;background:#3a3d42;"></div>
<div style="position:absolute;left:1359px;top:676px;width:7px;height:2px;background:#3a3d42;"></div>
<div style="position:absolute;left:1499px;top:676px;width:7px;height:2px;background:#3a3d42;"></div>
<div style="position:absolute;left:1605px;top:676px;width:7px;height:2px;background:#3a3d42;"></div>
<div style="position:absolute;left:1714px;top:676px;width:7px;height:2px;background:#3a3d42;"></div>
<div style="position:absolute;left:1777px;top:676px;width:7px;height:2px;background:#3a3d42;"></div>
<div style="position:absolute;left:1838px;top:676px;width:7px;height:2px;background:#3a3d42;"></div>
<div style="position:absolute;left:255px;top:705.2px;width:385px;height:58.09999999999991px;background:#f8f9fc;"></div>
<div style="position:absolute;left:640px;top:705.2px;width:1243px;height:58.09999999999991px;background:#ffffff;"></div>
<div style="position:absolute;left:255px;top:762.8px;width:1628px;height:1px;background:#e2e4e7;"></div>
<div style="position:absolute;left:262.3px;top:723.3px;width:23px;height:22.4px;background:#ffffff;border:1px solid #dfe2e6;border-radius:4px;box-sizing:border-box"></div>
<svg style="position:absolute;left:297.90000000000003px;top:712.7px;" width="44.8" height="44.8" viewBox="0 0 45 45"><defs><clipPath id="av8"><circle cx="22.5" cy="22.5" r="22.5"/></clipPath></defs><g clip-path="url(#av8)"><rect width="45" height="45" fill="#ffffff"/><ellipse cx="22" cy="23" rx="11" ry="15" fill="#7a4c30"/><path d="M11,18 Q12,6 22,6 Q32,6 33,18 Q28,10 22,10 Q16,10 11,18Z" fill="#a07a62"/><rect x="17" y="37" width="10" height="6" fill="#7a4c30"/></g></svg>
<div class="t" style="left:348.3px;top:726.00px;font-size:18.46px;font-weight:400;color:#212529;transform:scaleX(1.0144);">Adebayi, Emmanuel</div>
<div style="position:absolute;left:564.8px;top:721.0px;width:28.1px;height:25.4px;background:#1c9db6;border-radius:4px"></div>
<div class="t" style="left:571.0px;top:726.00px;font-size:17.73px;font-weight:700;color:#ffffff;transform:scaleX(1.0701);font-style:italic">M</div>
<svg style="position:absolute;left:602.5px;top:723.5px;" width="27" height="22" viewBox="0 0 27 22"><circle cx="9.7" cy="5.3" r="5.3" fill="#0c4677"/><path d="M0.5,19.8 Q0.5,11.8 7.5,11.8 L14.3,11.8 Q14.6,17.2 17.3,21.2 L1.8,21.2 Q0.5,21.2 0.5,19.8 Z" fill="#0c4677"/><path d="M20.8,9.4 L26.6,11.8 Q26.8,18 20.8,21.6 Q14.8,18 15,11.8 Z" fill="#0c4677"/><path d="M21.3,12 L24.9,13.4 Q24.8,17.6 21.3,19.6 Z" fill="#ffffff"/></svg>
<div class="t" style="left:647.3px;top:726.00px;font-size:18.46px;font-weight:400;color:#212529;transform:scaleX(0.8709);">10, Jul 2019</div>
<div style="position:absolute;left:782px;top:725.7px;width:20px;height:17px"><svg width="20" height="17" viewBox="0 0 20 17"><path d="M10,1 L19,16 L1,16 Z" fill="#ffc107" stroke="#ffc107" stroke-width="1.6" stroke-linejoin="round"/><rect x="9" y="5.5" width="2" height="5.8" rx="0.8" fill="#fff"/><circle cx="10" cy="13.4" r="1.1" fill="#fff"/></svg></div>
<div class="t" style="left:806.3px;top:726.00px;font-size:18.46px;font-weight:400;color:#212529;transform:scaleX(0.9616);">Never</div>
<div style="position:absolute;left:984px;top:734px;width:7px;height:2px;background:#3a3d42;"></div>
<div class="t" style="left:1122.8px;top:726.00px;font-size:18.46px;font-weight:400;color:#212529;transform:scaleX(0.7702);">J</div>
<div class="t" style="left:1268.2px;top:726.00px;font-size:18.46px;font-weight:400;color:#212529;transform:scaleX(1.0141);">Newton</div>
<div style="position:absolute;left:1359px;top:734px;width:7px;height:2px;background:#3a3d42;"></div>
<div style="position:absolute;left:1499px;top:734px;width:7px;height:2px;background:#3a3d42;"></div>
<div style="position:absolute;left:1605px;top:734px;width:7px;height:2px;background:#3a3d42;"></div>
<div style="position:absolute;left:1714px;top:734px;width:7px;height:2px;background:#3a3d42;"></div>
<div style="position:absolute;left:1777px;top:734px;width:7px;height:2px;background:#3a3d42;"></div>
<div style="position:absolute;left:1837.5px;top:726.0px;width:20px;height:17px"><svg width="20" height="17" viewBox="0 0 20 17"><path d="M10,1 L19,16 L1,16 Z" fill="#ffc107" stroke="#ffc107" stroke-width="1.6" stroke-linejoin="round"/><rect x="9" y="5.5" width="2" height="5.8" rx="0.8" fill="#fff"/><circle cx="10" cy="13.4" r="1.1" fill="#fff"/></svg></div>
<div style="position:absolute;left:255px;top:763.3px;width:385px;height:58.10000000000002px;background:#eceef2;"></div>
<div style="position:absolute;left:640px;top:763.3px;width:1243px;height:58.10000000000002px;background:#f2f2f2;"></div>
<div style="position:absolute;left:255px;top:820.9px;width:1628px;height:1px;background:#e2e4e7;"></div>
<div style="position:absolute;left:262.3px;top:781.3999999999999px;width:23px;height:22.4px;background:#ffffff;border:1px solid #dfe2e6;border-radius:4px;box-sizing:border-box"></div>
<svg style="position:absolute;left:297.90000000000003px;top:770.8px;" width="44.8" height="44.8" viewBox="0 0 45 45"><defs><clipPath id="av9"><circle cx="22.5" cy="22.5" r="22.5"/></clipPath></defs><g clip-path="url(#av9)"><rect width="45" height="45" fill="#6e9a48"/><rect x="0" y="0" width="18" height="45" fill="#8ab060"/><path d="M16,45 Q18,37 28,37 Q38,37 40,45Z" fill="#c8d4dc"/><path d="M17,22 Q16,5 29,5 Q43,6 41,24 L40,36 Q36,34 37,24 Z" fill="#3a2a22"/><ellipse cx="28" cy="22" rx="9.5" ry="12" fill="#f2cdb8"/><path d="M20,17 Q22,8 30,9 Q38,10 37,18 Q31,12 20,17Z" fill="#3a2a22"/></g></svg>
<div class="t" style="left:348.3px;top:784.00px;font-size:18.46px;font-weight:400;color:#212529;transform:scaleX(1.0203);">Ahmed, Maryam</div>
<div style="position:absolute;left:564.8px;top:779.0999999999999px;width:28.1px;height:25.4px;background:#1c9db6;border-radius:4px"></div>
<div class="t" style="left:571.0px;top:784.00px;font-size:17.73px;font-weight:700;color:#ffffff;transform:scaleX(1.0701);font-style:italic">M</div>
<svg style="position:absolute;left:602.5px;top:781.5999999999999px;" width="27" height="22" viewBox="0 0 27 22"><circle cx="9.7" cy="5.3" r="5.3" fill="#c8ccd2"/><path d="M0.5,19.8 Q0.5,11.8 7.5,11.8 L14.3,11.8 Q14.6,17.2 17.3,21.2 L1.8,21.2 Q0.5,21.2 0.5,19.8 Z" fill="#c8ccd2"/><path d="M20.8,9.4 L26.6,11.8 Q26.8,18 20.8,21.6 Q14.8,18 15,11.8 Z" fill="#c8ccd2"/><path d="M21.3,12 L24.9,13.4 Q24.8,17.6 21.3,19.6 Z" fill="#ffffff"/></svg>
<div class="t" style="left:647.3px;top:784.00px;font-size:18.46px;font-weight:400;color:#212529;transform:scaleX(0.9209);">13, May 2020</div>
<div style="position:absolute;left:782px;top:783.8px;width:20px;height:17px"><svg width="20" height="17" viewBox="0 0 20 17"><path d="M10,1 L19,16 L1,16 Z" fill="#ffc107" stroke="#ffc107" stroke-width="1.6" stroke-linejoin="round"/><rect x="9" y="5.5" width="2" height="5.8" rx="0.8" fill="#fff"/><circle cx="10" cy="13.4" r="1.1" fill="#fff"/></svg></div>
<div class="t" style="left:806.3px;top:784.00px;font-size:18.46px;font-weight:400;color:#212529;transform:scaleX(0.9616);">Never</div>
<div class="t" style="left:983.6px;top:784.00px;font-size:18.46px;font-weight:400;color:#212529;transform:scaleX(0.9032);">Year 13</div>
<div class="t" style="left:1122.8px;top:784.00px;font-size:18.46px;font-weight:400;color:#212529;transform:scaleX(0.9203);">8C</div>
<div style="position:absolute;left:1268px;top:792px;width:7px;height:2px;background:#3a3d42;"></div>
<div style="position:absolute;left:1359px;top:792px;width:7px;height:2px;background:#3a3d42;"></div>
<div style="position:absolute;left:1499px;top:792px;width:7px;height:2px;background:#3a3d42;"></div>
<div style="position:absolute;left:1605px;top:792px;width:7px;height:2px;background:#3a3d42;"></div>
<div style="position:absolute;left:1714px;top:792px;width:7px;height:2px;background:#3a3d42;"></div>
<div style="position:absolute;left:1777px;top:792px;width:7px;height:2px;background:#3a3d42;"></div>
<div style="position:absolute;left:1838px;top:792px;width:7px;height:2px;background:#3a3d42;"></div>
<div style="position:absolute;left:255px;top:821.4px;width:385px;height:58.10000000000002px;background:#f8f9fc;"></div>
<div style="position:absolute;left:640px;top:821.4px;width:1243px;height:58.10000000000002px;background:#ffffff;"></div>
<div style="position:absolute;left:255px;top:879.0px;width:1628px;height:1px;background:#e2e4e7;"></div>
<div style="position:absolute;left:262.3px;top:839.4999999999999px;width:23px;height:22.4px;background:#ffffff;border:1px solid #dfe2e6;border-radius:4px;box-sizing:border-box"></div>
<svg style="position:absolute;left:297.90000000000003px;top:828.9px;" width="44.8" height="44.8" viewBox="0 0 45 45"><defs><clipPath id="av10"><circle cx="22.5" cy="22.5" r="22.5"/></clipPath></defs><g clip-path="url(#av10)"><rect width="45" height="45" fill="#ffffff"/><path d="M4,45 Q6,33 22,32 Q38,33 40,45Z" fill="#3b4a3a"/><path d="M6,40 L38,40" stroke="#8a9a80" stroke-width="2"/><path d="M9,36 Q8,8 22,6 Q36,8 35,36 L30,34 L29,20 L15,20 L14,34Z" fill="#b47a48"/><ellipse cx="22" cy="21" rx="7.5" ry="10" fill="#f0d0bc"/></g></svg>
<div class="t" style="left:348.3px;top:843.00px;font-size:18.46px;font-weight:400;color:#212529;">Akeman, Rebecca</div>
<div style="position:absolute;left:564.8px;top:837.1999999999999px;width:28.1px;height:25.4px;background:#1c9db6;border-radius:4px"></div>
<div class="t" style="left:571.0px;top:842.00px;font-size:17.73px;font-weight:700;color:#ffffff;transform:scaleX(1.0701);font-style:italic">M</div>
<svg style="position:absolute;left:602.5px;top:839.6999999999999px;" width="27" height="22" viewBox="0 0 27 22"><circle cx="9.7" cy="5.3" r="5.3" fill="#c8ccd2"/><path d="M0.5,19.8 Q0.5,11.8 7.5,11.8 L14.3,11.8 Q14.6,17.2 17.3,21.2 L1.8,21.2 Q0.5,21.2 0.5,19.8 Z" fill="#c8ccd2"/><path d="M20.8,9.4 L26.6,11.8 Q26.8,18 20.8,21.6 Q14.8,18 15,11.8 Z" fill="#c8ccd2"/><path d="M21.3,12 L24.9,13.4 Q24.8,17.6 21.3,19.6 Z" fill="#ffffff"/></svg>
<div class="t" style="left:647.3px;top:843.00px;font-size:18.46px;font-weight:400;color:#212529;transform:scaleX(0.9209);">13, May 2020</div>
<div style="position:absolute;left:782px;top:841.9px;width:20px;height:17px"><svg width="20" height="17" viewBox="0 0 20 17"><path d="M10,1 L19,16 L1,16 Z" fill="#ffc107" stroke="#ffc107" stroke-width="1.6" stroke-linejoin="round"/><rect x="9" y="5.5" width="2" height="5.8" rx="0.8" fill="#fff"/><circle cx="10" cy="13.4" r="1.1" fill="#fff"/></svg></div>
<div class="t" style="left:806.3px;top:843.00px;font-size:18.46px;font-weight:400;color:#212529;transform:scaleX(0.9616);">Never</div>
<div class="t" style="left:983.6px;top:843.00px;font-size:18.46px;font-weight:400;color:#212529;transform:scaleX(0.9032);">Year 13</div>
<div class="t" style="left:1122.8px;top:843.00px;font-size:18.46px;font-weight:400;color:#212529;transform:scaleX(0.8022);">8E</div>
<div style="position:absolute;left:1268px;top:850px;width:7px;height:2px;background:#3a3d42;"></div>
<div style="position:absolute;left:1359px;top:850px;width:7px;height:2px;background:#3a3d42;"></div>
<div style="position:absolute;left:1499px;top:850px;width:7px;height:2px;background:#3a3d42;"></div>
<div style="position:absolute;left:1605px;top:850px;width:7px;height:2px;background:#3a3d42;"></div>
<div style="position:absolute;left:1714px;top:850px;width:7px;height:2px;background:#3a3d42;"></div>
<div style="position:absolute;left:1777px;top:850px;width:7px;height:2px;background:#3a3d42;"></div>
<div style="position:absolute;left:1838px;top:850px;width:7px;height:2px;background:#3a3d42;"></div>
<div style="position:absolute;left:255px;top:879.5px;width:385px;height:58.10000000000002px;background:#eceef2;"></div>
<div style="position:absolute;left:640px;top:879.5px;width:1243px;height:58.10000000000002px;background:#f2f2f2;"></div>
<div style="position:absolute;left:255px;top:937.1px;width:1628px;height:1px;background:#e2e4e7;"></div>
<div style="position:absolute;left:262.3px;top:897.5999999999999px;width:23px;height:22.4px;background:#ffffff;border:1px solid #dfe2e6;border-radius:4px;box-sizing:border-box"></div>
<svg style="position:absolute;left:297.90000000000003px;top:887.0px;" width="44.8" height="44.8" viewBox="0 0 45 45"><defs><clipPath id="av11"><circle cx="22.5" cy="22.5" r="22.5"/></clipPath></defs><g clip-path="url(#av11)"><rect width="45" height="45" fill="#c4c4c4"/><circle cx="22.5" cy="17.2" r="10" fill="#fff"/><ellipse cx="22.5" cy="46.5" rx="18" ry="20.5" fill="#fff"/></g></svg>
<div class="t" style="left:348.3px;top:901.00px;font-size:18.46px;font-weight:400;color:#212529;transform:scaleX(1.0052);">Allam, Shiva</div>
<svg style="position:absolute;left:602.5px;top:897.8px;" width="27" height="22" viewBox="0 0 27 22"><circle cx="9.7" cy="5.3" r="5.3" fill="#0c4677"/><path d="M0.5,19.8 Q0.5,11.8 7.5,11.8 L14.3,11.8 Q14.6,17.2 17.3,21.2 L1.8,21.2 Q0.5,21.2 0.5,19.8 Z" fill="#0c4677"/><path d="M20.8,9.4 L26.6,11.8 Q26.8,18 20.8,21.6 Q14.8,18 15,11.8 Z" fill="#0c4677"/><path d="M21.3,12 L24.9,13.4 Q24.8,17.6 21.3,19.6 Z" fill="#ffffff"/></svg>
<div class="t" style="left:647.3px;top:901.00px;font-size:18.46px;font-weight:400;color:#212529;transform:scaleX(0.9161);">23, Sep 2020</div>
<div class="t" style="left:782.5px;top:901.00px;font-size:18.46px;font-weight:400;color:#212529;transform:scaleX(1.0308);">2 days ago</div>
<div class="t" style="left:1359.1px;top:901.00px;font-size:18.46px;font-weight:400;color:#212529;transform:scaleX(0.9813);">2 / 3 (66%)</div>
<div style="position:absolute;left:1498.3px;top:892.5px;width:28.4px;height:33.6px;background:#ffc107;border-radius:4px"></div>
<div style="position:absolute;left:1605px;top:892.5px;width:28px;height:33.6px;background:#28a745;border-radius:4px"></div>
</div>
<div style="position:absolute;left:1883px;top:236.5px;width:19px;height:671.5px;background:#fafafa;"></div>
<svg style="position:absolute;left:1887px;top:242px;" width="12" height="9" viewBox="0 0 12 9"><polygon points="6,0.8 11.2,8 0.8,8" fill="#8a8a8a" stroke="#8a8a8a" stroke-linejoin="round"/></svg>
<div style="position:absolute;left:1887.3px;top:258.3px;width:10.7px;height:147.2px;background:#8a8a8a;border-radius:6px"></div>
<svg style="position:absolute;left:1887px;top:892px;" width="12" height="9" viewBox="0 0 12 9"><polygon points="0.8,1 11.2,1 6,8.2" fill="#8a8a8a" stroke="#8a8a8a" stroke-linejoin="round"/></svg>
<div style="position:absolute;left:236px;top:928px;width:1684px;height:1px;background:rgba(0,0,0,0.07);"></div>
<div class="t" style="left:254.9px;top:950.00px;font-size:17.73px;font-weight:400;color:#3e4552;transform:scaleX(1.0187);">© 2025 Morrisby Ltd</div>
<div class="t" style="left:1647.4px;top:950.00px;font-size:17.15px;font-weight:400;color:#4a5160;transform:scaleX(1.0961);">About</div>
<div class="t" style="left:1719.9px;top:950.00px;font-size:17.15px;font-weight:400;color:#4a5160;transform:scaleX(1.0991);">Support</div>
<div class="t" style="left:1809.0px;top:950.00px;font-size:17.15px;font-weight:400;color:#4a5160;transform:scaleX(1.0920);">Contact Us</div>
</body></html>
